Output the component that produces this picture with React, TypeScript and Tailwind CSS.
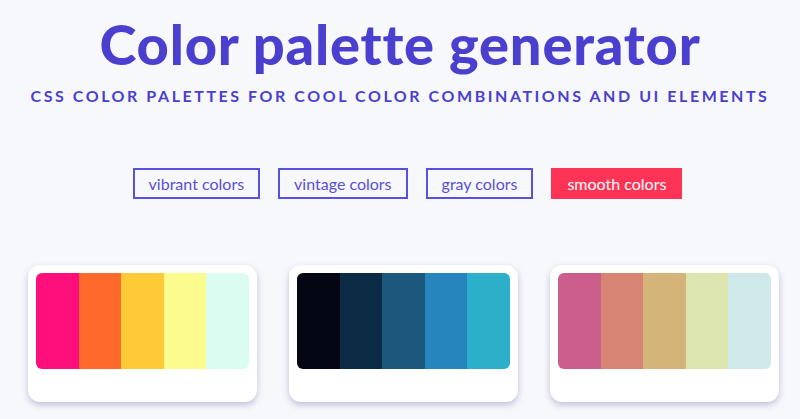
const palettes: string[][] = [
  ['#ff0f7b', '#ff692b', '#ffca35', '#fbfb8e', '#dafcf1'],
  ['#050614', '#0c2b44', '#1b587c', '#2685bd', '#2cafc8'],
  ['#cc5e8c', '#d78572', '#d5b47a', '#dce4b0', '#cfe9eb'],
];

const filters = [
  { label: 'vibrant colors', active: false },
  { label: 'vintage colors', active: false },
  { label: 'gray colors', active: false },
  { label: 'smooth colors', active: true },
];

export default function App() {
  return (
    <div className="min-h-screen bg-[#f7f8fb] font-['Lato',sans-serif] text-[#4b3fcf]">
      <header className="pt-[12px] text-center">
        <h1 className="text-[56px] font-black leading-[64px] tracking-[0.8px]">
          Color palette generator
        </h1>
        <p className="mt-[8px] text-[16px] font-bold uppercase leading-[24px] tracking-[2.55px]">
          CSS color palettes for cool color combinations and UI elements
        </p>
      </header>

      <nav className="mt-[60px] flex justify-center gap-[18px] pl-[15px]">
        {filters.map((f) => (
          <button
            key={f.label}
            className={`h-[31px] border-2 px-[14px] text-[16px] leading-none ${
              f.active
                ? 'border-[#ff3355] bg-[#ff3355] text-white'
                : 'border-[#5a50e0] text-[#5a4fd6]'
            }`}
          >
            {f.label}
          </button>
        ))}
      </nav>

      <main className="mt-[66px] flex gap-8 pl-[28px]">
        {palettes.map((colors, i) => (
          <div
            key={i}
            className="w-[229px] rounded-[12px] bg-white p-2 pb-[33px] shadow-[0_3px_6px_rgba(140,138,185,0.5)]"
          >
            <div className="flex h-[96px] overflow-hidden rounded-[6px]">
              {colors.map((c) => (
                <div key={c} className="flex-1" style={{ backgroundColor: c }} />
              ))}
            </div>
          </div>
        ))}
      </main>
    </div>
  );
}
